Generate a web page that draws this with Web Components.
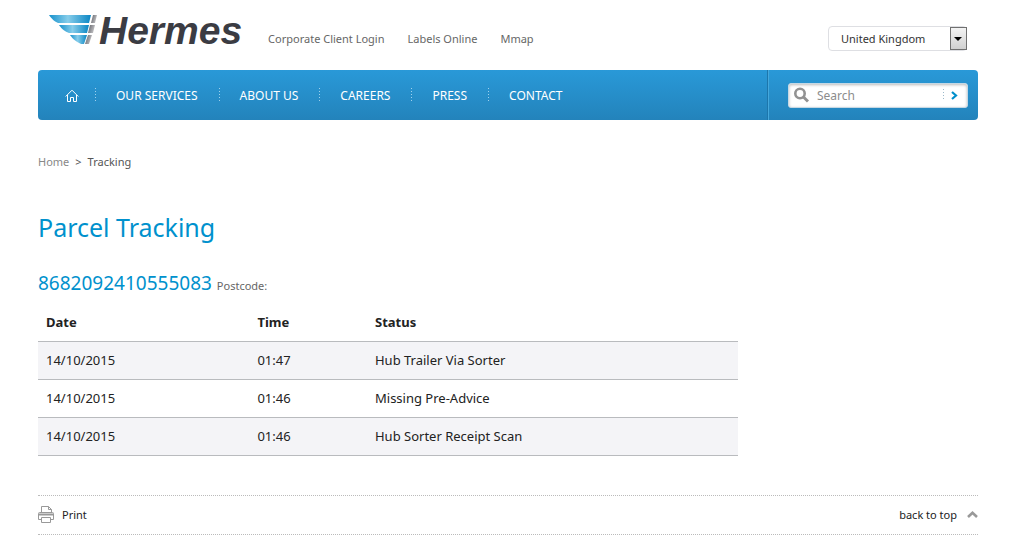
<!DOCTYPE html>
<html lang="en">
<head>
<meta charset="utf-8">
<meta name="viewport" content="width=device-width, initial-scale=1">
<title>Parcel Tracking | Hermes</title>
<style>
html { background: #fff; }
body { margin: 0; color: #333; font: 11px/16px "Noto Sans", "Open Sans", sans-serif; }
</style>
</head>
<body>
<tracking-page id="top"></tracking-page>
<script>
function define(name, markup) {
  const template = document.createElement('template');
  template.innerHTML = '<style>*{box-sizing:border-box}a{color:inherit;text-decoration:none}</style>' + markup;
  customElements.define(name, class extends HTMLElement {
    constructor() {
      super();
      this.attachShadow({ mode: 'open' }).append(template.content.cloneNode(true));
    }
  });
}

define('brand-logo', `
<style>
:host { display: block; }
a { display: flex; align-items: center; color: #3b3c43; }
svg { display: block; flex: none; }
span { font: italic bold 39px/40px "Liberation Sans", Arial, sans-serif; }
</style>
<a href="#" aria-label="Hermes">
  <svg width="51" height="32" viewBox="0 0 51 32" aria-hidden="true">
    <defs>
      <linearGradient id="b"><stop offset="0" stop-color="#1691cc"/><stop offset=".45" stop-color="#86cdea"/><stop offset="1" stop-color="#0b86c4"/></linearGradient>
      <linearGradient id="g" x2="1" y2=".4"><stop offset="0" stop-color="#5b5c62"/><stop offset="1" stop-color="#c3c3c6"/></linearGradient>
    </defs>
    <g fill="url(#b)"><path d="M1 0H43L41 8H10Q4 5 1 0Z"/><path d="M11 10H41L39 18H21Q15 16 11 10Z"/><path d="M22 20H39L36 29H33Q26 26 22 20Z"/></g>
    <g fill="url(#g)"><path d="M45 0H49L47 8H43Z"/><path d="M42 10H47L45 18H40Z"/><path d="M40 20H44L41 29H37Z"/></g>
  </svg><span>Hermes</span>
</a>`);

define('country-picker', `
<style>
:host { display: block; position: relative; width: 139px; }
select { display: block; appearance: none; width: 100%; height: 25px; margin: 0; padding: 0 24px 0 12px; border: 1px solid #dedfe3; border-radius: 4px; background: #fff; color: #333; font: inherit; }
svg { position: absolute; top: 0; right: 0; pointer-events: none; }
</style>
<select aria-label="Country"><option>United Kingdom</option></select>
<svg width="18" height="25" aria-hidden="true"><defs><linearGradient id="k" x2="0" y2="1"><stop stop-color="#f4f4f4"/><stop offset="1" stop-color="#cfcfcf"/></linearGradient></defs><rect x="1.5" y="1.5" width="16" height="22" fill="url(#k)" stroke="#707070"/><path d="M5 11H13L9 15Z" fill="#000"/></svg>`);

define('site-header', `
<style>
:host { display: flex; align-items: center; height: 70px; padding: 0 11px 8px 10px; color: #666; }
nav { display: flex; flex: 1; gap: 23px; padding: 16px 0 0 26px; }
country-picker { margin-top: 15px; }
</style>
<brand-logo></brand-logo>
<nav aria-label="Services"><a href="#">Corporate Client Login</a><a href="#">Labels Online</a><a href="#">Mmap</a></nav>
<country-picker></country-picker>`);

define('nav-item', `
<style>
:host { display: flex; align-items: center; }
:host(:not(:first-child))::before { content: ""; width: 1px; height: 14px; background: repeating-linear-gradient(#9fd1ee 0 1px, transparent 1px 3px); }
a { display: flex; align-items: center; height: 50px; padding: 1px 21px 0 20px; }
:host(:first-child) a { padding: 0 16px 0 27px; }
</style>
<a href="#"><slot></slot></a>`);

define('site-search', `
<style>
:host { display: block; }
form { display: flex; align-items: center; width: 180px; height: 25px; margin: 0; padding-left: 5px; border: 1px solid #c5d8e4; border-radius: 3px; background: #fff; box-shadow: inset 0 1px 3px #bbb; }
input { flex: 1; min-width: 0; height: 23px; margin: 0; padding: 0 0 0 8px; border: 0; outline: 0; background: none; color: #555; font: 12px/16px "Noto Sans", sans-serif; }
input::placeholder { color: #8c8c8c; opacity: 1; }
svg { display: block; }
button { display: flex; align-items: center; gap: 7px; height: 23px; margin: 0; padding: 0 9px 0 0; border: 0; background: none; }
button::before { content: ""; width: 1px; height: 12px; background: repeating-linear-gradient(#9bb9ca 0 1px, transparent 1px 3px); }
</style>
<form role="search">
  <svg width="15" height="16" viewBox="0 0 15 16" fill="none" stroke="#929292" aria-hidden="true"><circle cx="6" cy="6.500" r="4.700" stroke-width="2.600"/><path d="M9.500 10L14 14.500" stroke-width="3"/></svg>
  <input type="text" aria-label="Search" placeholder="Search">
  <button aria-label="Go"><svg width="7" height="9" viewBox="0 0 7 9" fill="none" stroke="#008fcb" stroke-width="2.200"><path d="M1 1L5 4.500L1 8"/></svg></button>
</form>`);

define('main-nav', `
<style>
:host { display: flex; height: 50px; border-radius: 4px; background: linear-gradient(#2999d8, #2383bb); color: #fff; font-size: 12px; }
nav { display: flex; flex: 1; }
aside { display: flex; align-items: center; padding: 0 10px 0 20px; border-left: 1px solid #1d76ab; box-shadow: inset 1px 0 #45a8dc; }
</style>
<nav aria-label="Main"><slot></slot></nav>
<aside><site-search></site-search></aside>`);

define('bread-crumbs', `
<style>
:host { display: block; padding-top: 34px; }
nav { display: flex; gap: 6px; color: #555; }
a { color: #888; }
</style>
<nav aria-label="Breadcrumb"><a href="#">Home</a><span>&gt;</span><span>Tracking</span></nav>`);

define('parcel-summary', `
<style>
:host { display: block; color: #0091cd; }
h1 { margin: 40px 0 0; font-size: 25px; line-height: 34px; font-weight: 400; }
h2 { margin: 26px 0 0; font-size: 19px; line-height: 26px; font-weight: 400; }
small { color: #666; font-size: 11px; }
</style>
<h1>Parcel Tracking</h1>
<h2><slot></slot> <small>Postcode:</small></h2>`);

define('tracking-table', `
<style>
:host { display: block; max-width: 700px; padding-top: 4px; }
table { width: 100%; border-collapse: collapse; table-layout: fixed; font-size: 13px; line-height: 18px; color: #222; }
th, td { height: 38px; padding: 0 8px; text-align: left; border-bottom: 1px solid #b9bbbe; }
tbody tr:nth-child(odd) { background: #f4f4f7; }
.date { width: 30.2%; }
.time { width: 16.8%; }
</style>
<table>
<thead><tr><th class="date">Date</th><th class="time">Time</th><th>Status</th></tr></thead>
<tbody>
<tr><td>14/10/2015</td><td>01:47</td><td>Hub Trailer Via Sorter</td></tr>
<tr><td>14/10/2015</td><td>01:46</td><td>Missing Pre-Advice</td></tr>
<tr><td>14/10/2015</td><td>01:46</td><td>Hub Sorter Receipt Scan</td></tr>
</tbody>
</table>`);

define('page-tools', `
<style>
:host { display: flex; align-items: center; justify-content: space-between; height: 40px; margin-top: 39px; border: dotted #bbb; border-width: 1px 0; color: #222; }
button, a { display: flex; align-items: center; margin: 0; padding: 0; border: 0; background: none; color: inherit; font: inherit; }
button { gap: 8px; }
a { gap: 10px; }
</style>
<button type="button"><svg width="16" height="17" viewBox="0 0 16 17" fill="none" stroke="#999" aria-hidden="true"><path d="M3.500 7V.500H10.500L13.500 3.500V7M10.500 .500V3.500H13.500M3 13.500H.500V7.500Q.500 6.500 1.500 6.500H14.500Q15.500 6.500 15.500 7.500V13.500H13M3.500 11.500H12.500V16.500H3.500Z"/><path d="M1 8.500H15" stroke-width="2"/></svg>Print</button>
<a href="#top">back to top<svg width="11" height="7" viewBox="0 0 11 7" fill="none" stroke="#999" stroke-width="2.600" aria-hidden="true"><path d="M1 6L5.500 1.800L10 6"/></svg></a>`);

define('tracking-page', `
<style>
:host { display: block; max-width: 1011px; margin: 0 auto; padding: 0 33px 0 38px; box-sizing: border-box; }
svg { display: block; }
</style>
<site-header></site-header>
<main-nav>
  <nav-item><svg width="14" height="13" viewBox="0 0 14 13" fill="none" stroke="#fff" role="img" aria-label="Home"><path d="M.700 7.500L7 1.200L13.300 7.500M2.500 6V12.500H5.500V8.500H8.500V12.500H11.500V6"/></svg></nav-item>
  <nav-item>OUR SERVICES</nav-item>
  <nav-item>ABOUT US</nav-item>
  <nav-item>CAREERS</nav-item>
  <nav-item>PRESS</nav-item>
  <nav-item>CONTACT</nav-item>
</main-nav>
<main>
  <bread-crumbs></bread-crumbs>
  <parcel-summary>8682092410555083</parcel-summary>
  <tracking-table></tracking-table>
</main>
<page-tools></page-tools>`);
</script>
</body>
</html>
